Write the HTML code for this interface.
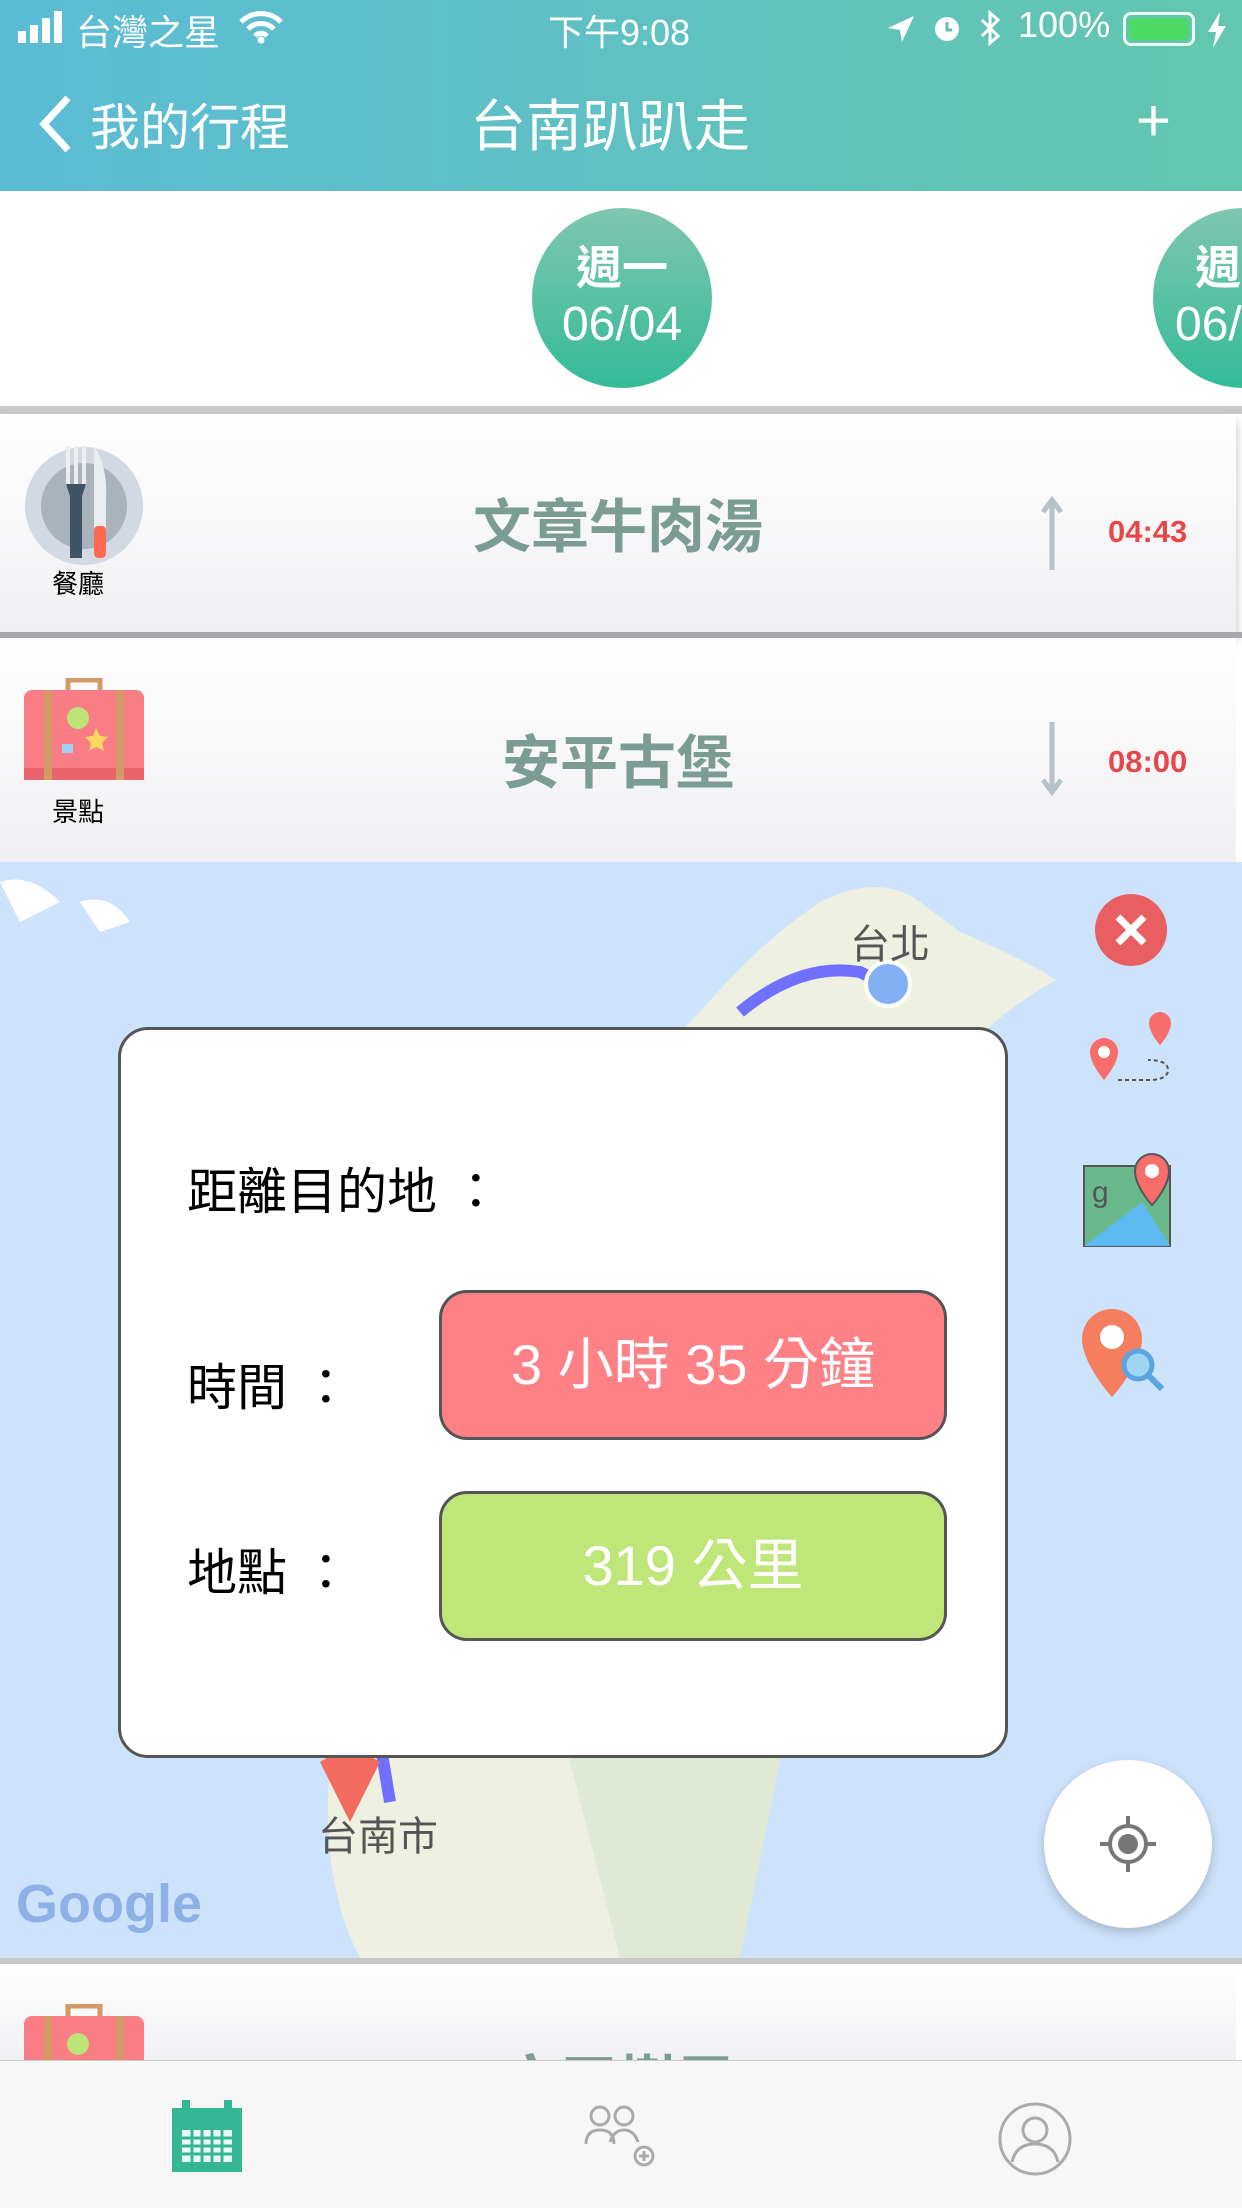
<!DOCTYPE html>
<html><head><meta charset="utf-8"><style>
*{margin:0;padding:0;box-sizing:border-box}
body{width:1242px;height:2208px;overflow:hidden;position:relative;font-family:"Liberation Sans","Noto Sans CJK TC",sans-serif;background:#fff}
.abs{position:absolute}
.hdr{left:0;top:0;width:1242px;height:191px;background:linear-gradient(90deg,#5bbcd6,#63c6ae)}
.st{color:#fff;font-size:36px;top:4px}
.nav{color:#fff;font-size:56px;top:82px}
.circ{border-radius:50%;background:linear-gradient(#7fc6b0,#34bb98);color:#fff;text-align:center}
.row{left:0;width:1236px;background:linear-gradient(#fff,#f0f0f3);box-shadow:0 8px 10px rgba(0,0,0,.25)}
.rt{width:100%;text-align:center;color:#7b9c92;font-size:58px;font-weight:bold}
.tm{color:#e8474a;font-size:31px;font-weight:bold;left:1108px}
.lbl{font-size:50px;color:#000}
.btn{left:439px;width:508px;border:3px solid #555;border-radius:28px;color:#fff;font-size:56px;text-align:center}
</style></head><body>
<div class="abs hdr"></div>
<div class="abs st" style="left:18px;top:10px"><svg width="50" height="32"><rect x="0" y="20" width="8" height="12" fill="#fff"/><rect x="12" y="14" width="8" height="18" fill="#fff"/><rect x="24" y="7" width="8" height="25" fill="#fff"/><rect x="36" y="0" width="8" height="32" fill="#fff"/></svg></div>
<div class="abs st" style="left:76px">台灣之星</div>
<div class="abs" style="left:238px;top:10px"><svg width="46" height="34" viewBox="0 0 46 34"><path d="M3 12a28 28 0 0 1 40 0M10 19a18 18 0 0 1 26 0M17 26a8 8 0 0 1 12 0" stroke="#fff" stroke-width="5" fill="none"/><circle cx="23" cy="30" r="3.5" fill="#fff"/></svg></div>
<div class="abs st" style="left:548px">下午9:08</div>
<div class="abs" style="left:886px;top:14px"><svg width="30" height="30"><path d="M28 2L2 14l12 2 2 12z" fill="#fff"/></svg></div>
<div class="abs" style="left:932px;top:10px"><svg width="30" height="34"><circle cx="15" cy="19" r="12" fill="#fff"/><path d="M15 12v8h5" stroke="#5fc1bd" stroke-width="3" fill="none"/></svg></div>
<div class="abs" style="left:978px;top:10px"><svg width="24" height="36"><path d="M4 10l16 16-8 7V3l8 7L4 26" stroke="#fff" stroke-width="3" fill="none"/></svg></div>
<div class="abs st" style="left:1018px">100%</div>
<div class="abs" style="left:1123px;top:12px;width:72px;height:34px;border:3px solid #eafaf3;border-radius:8px;padding:3px"><div style="width:100%;height:100%;background:#4cd964;border-radius:4px"></div></div>
<div class="abs" style="left:1206px;top:12px"><svg width="22" height="36"><path d="M14 0L2 20h8l-3 16 13-22h-8z" fill="#fff"/></svg></div>
<div class="abs" style="left:36px;top:94px"><svg width="40" height="60"><path d="M32 4L8 30l24 26" stroke="#fff" stroke-width="7" fill="none"/></svg></div>
<div class="abs nav" style="left:90px;font-size:50px;top:88px">我的行程</div>
<div class="abs nav" style="left:470px">台南趴趴走</div>
<div class="abs nav" style="left:1136px;font-size:60px;top:86px">+</div>

<div class="abs circ" style="left:532px;top:208px;width:180px;height:180px"><div style="font-size:46px;font-weight:bold;margin-top:34px;line-height:52px">週一</div><div style="font-size:48px;line-height:62px">06/04</div></div>
<div class="abs circ" style="left:1153px;top:208px;width:180px;height:180px;text-align:left;padding-left:42px"><div style="font-size:46px;font-weight:bold;margin-top:34px;line-height:52px">週</div><div style="font-size:48px;line-height:62px;margin-left:-20px">06/</div></div>
<div class="abs" style="left:0;top:406px;width:1242px;height:8px;background:#c8c8c8"></div>

<div class="abs row" style="top:414px;height:218px">
 <div class="abs" style="left:24px;top:32px"><svg width="120" height="120"><circle cx="60" cy="60" r="59" fill="#d3d9e2"/><circle cx="60" cy="60" r="43" fill="#aab2bb"/><path d="M44 0v40M52 0v40M60 0v40" stroke="#eee" stroke-width="4"/><path d="M42 38h20l-4 12v62h-12V50z" fill="#3f5364"/><path d="M70 0q14 20 12 55v57H70z" fill="#e9edf0"/><rect x="70" y="80" width="12" height="32" rx="4" fill="#ff6b52"/></svg></div>
 <div class="abs" style="left:52px;top:150px;font-size:26px">餐廳</div>
 <div class="abs rt" style="top:66px">文章牛肉湯</div>
 <div class="abs" style="left:1040px;top:82px"><svg width="24" height="76"><path d="M12 4v70M3 16L12 4l9 12" stroke="#b6c1c8" stroke-width="5" fill="none"/></svg></div>
 <div class="abs tm" style="top:100px">04:43</div>
</div>
<div class="abs" style="left:0;top:632px;width:1242px;height:6px;background:#a8a8ac"></div>
<div class="abs row" style="top:638px;height:224px;box-shadow:none">
 <div class="abs" style="left:24px;top:40px"><svg width="120" height="104"><path d="M44 12V2h32v10" stroke="#d39a66" stroke-width="5" fill="none"/><rect x="0" y="12" width="120" height="90" rx="8" fill="#f87d84"/><rect x="0" y="90" width="120" height="12" fill="#e9646c"/><rect x="20" y="12" width="8" height="90" fill="#d39a66"/><rect x="92" y="12" width="8" height="90" fill="#d39a66"/><circle cx="54" cy="40" r="11" fill="#bde376"/><path d="M72 50l4 8 8 1-6 6 2 8-8-4-7 4 2-8-6-6 8-1z" fill="#ffd75e"/><rect x="38" y="66" width="11" height="9" fill="#a6cdf2"/></svg></div>
 <div class="abs" style="left:52px;top:154px;font-size:26px">景點</div>
 <div class="abs rt" style="top:78px">安平古堡</div>
 <div class="abs" style="left:1040px;top:82px"><svg width="24" height="76"><path d="M12 2v70M3 60l9 12 9-12" stroke="#b6c1c8" stroke-width="5" fill="none"/></svg></div>
 <div class="abs tm" style="top:106px">08:00</div>
</div>

<div class="abs" style="left:0;top:862px;width:1242px;height:1096px;background:#cde2fb;overflow:hidden">
 <svg class="abs" style="left:0;top:0" width="1242" height="1096">
  <path d="M700 150 Q760 80 820 40 Q880 10 920 40 L960 70 Q1030 100 1056 118 Q980 160 920 240 Q880 320 860 420 Q840 540 820 700 Q780 880 740 1000 L720 1096 H360 Q320 1020 330 900 Q350 780 420 600 Q520 380 600 250Z" fill="#eef0e2"/>
  <path d="M560 860 Q640 700 760 500 Q820 420 860 460 Q820 700 780 900 L740 1096 H620Z" fill="#dfe9d4"/>
  <path d="M740 150 Q800 100 860 110 L880 120" stroke="#7070ff" stroke-width="12" fill="none"/>
  <path d="M380 880 L390 940" stroke="#7070ff" stroke-width="12"/>
  <circle cx="888" cy="122" r="22" fill="#82b0f2" stroke="#fff" stroke-width="4"/>
  <path d="M320 900 Q350 880 380 900 L350 960z" fill="#f26b5e"/>
  <path d="M0 20 Q30 10 60 40 L20 60z M80 40 Q110 30 130 60 L100 70z" fill="#fff"/>
  <text x="850" y="96" font-size="40" fill="#555" font-family="Noto Sans CJK TC">台北</text>
  <text x="318" y="988" font-size="40" fill="#555" font-family="Noto Sans CJK TC">台南市</text>
  <text x="16" y="1060" font-size="54" fill="#8fb0e6" font-family="Liberation Sans" font-weight="bold">Google</text>
 </svg>
 <svg class="abs" style="left:1094px;top:31px" width="74" height="74"><circle cx="37" cy="37" r="36" fill="#e95f61"/><path d="M24 24l26 26M50 24L24 50" stroke="#fff" stroke-width="7"/></svg>
 <svg class="abs" style="left:1082px;top:148px" width="96" height="88"><path d="M22 28a14 14 0 0 1 14 14c0 12-14 28-14 28S8 54 8 42a14 14 0 0 1 14-14z" fill="#f76e6a"/><circle cx="22" cy="42" r="6" fill="#fff"/><path d="M78 2a11 11 0 0 1 11 11c0 10-11 22-11 22S67 23 67 13A11 11 0 0 1 78 2z" fill="#f76e6a"/><path d="M36 70h30q20 0 20-10t-20-10" stroke="#555" stroke-width="2" stroke-dasharray="4 3" fill="none"/></svg>
 <svg class="abs" style="left:1082px;top:290px" width="96" height="96"><rect x="2" y="14" width="86" height="80" fill="#6ab98a" stroke="#555" stroke-width="2"/><path d="M2 94L60 50 88 94z" fill="#5db9f1"/><path d="M70 2a17 17 0 0 1 17 17c0 16-17 34-17 34S53 35 53 19A17 17 0 0 1 70 2z" fill="#f76e6a" stroke="#555" stroke-width="2"/><circle cx="70" cy="19" r="7" fill="#fff"/><text x="10" y="50" font-size="30" fill="#555">g</text></svg>
 <svg class="abs" style="left:1080px;top:445px" width="100" height="100"><path d="M32 2a30 30 0 0 1 30 30c0 25-30 58-30 58S2 57 2 32A30 30 0 0 1 32 2z" fill="#f47e5e"/><circle cx="32" cy="30" r="12" fill="#fff"/><circle cx="58" cy="58" r="14" fill="#9fd5f3" stroke="#5aa4e0" stroke-width="5"/><path d="M68 68l14 14" stroke="#5aa4e0" stroke-width="6"/></svg>
 <div class="abs" style="left:1044px;top:898px;width:168px;height:168px;border-radius:50%;background:#fff;box-shadow:0 4px 10px rgba(0,0,0,.2)"><svg class="abs" style="left:52px;top:52px" width="64" height="64"><circle cx="32" cy="32" r="18" fill="none" stroke="#777" stroke-width="4"/><circle cx="32" cy="32" r="10" fill="#777"/><path d="M32 4v10M32 50v10M4 32h10M50 32h10" stroke="#777" stroke-width="4"/></svg></div>
</div>

<div class="abs" style="left:118px;top:1027px;width:890px;height:731px;background:#fff;border:3px solid #555;border-radius:30px"></div>
<div class="abs lbl" style="left:187px;top:1152px">距離目的地 ：</div>
<div class="abs lbl" style="left:187px;top:1348px">時間 ：</div>
<div class="abs lbl" style="left:187px;top:1533px">地點 ：</div>
<div class="abs btn" style="top:1290px;height:150px;background:#fe8186;line-height:144px">3 小時 35 分鐘</div>
<div class="abs btn" style="top:1491px;height:150px;background:#bee678;line-height:144px">319 公里</div>

<div class="abs" style="left:0;top:1958px;width:1242px;height:6px;background:#c8c8c8"></div>
<div class="abs row" style="top:1964px;height:100px;box-shadow:none">
 <div class="abs" style="left:24px;top:40px"><svg width="120" height="60"><path d="M44 12V2h32v10" stroke="#d39a66" stroke-width="5" fill="none"/><rect x="0" y="12" width="120" height="60" rx="8" fill="#f87d84"/><rect x="20" y="12" width="8" height="60" fill="#d39a66"/><rect x="92" y="12" width="8" height="60" fill="#d39a66"/><circle cx="54" cy="40" r="11" fill="#bde376"/></svg></div>
 <div class="abs rt" style="top:72px">安平樹屋</div>
</div>
<div class="abs" style="left:0;top:2060px;width:1242px;height:148px;background:#f7f7f7;border-top:1px solid #ccc"></div>
<svg class="abs" style="left:172px;top:2100px" width="70" height="72"><rect x="0" y="8" width="70" height="64" fill="#35b795"/><rect x="10" y="0" width="8" height="14" fill="#35b795"/><rect x="52" y="0" width="8" height="14" fill="#35b795"/><g fill="#fff"><rect x="10" y="30" width="50" height="32" opacity=".9"/></g><path d="M10 38h50M10 46h50M10 54h50M20 30v32M30 30v32M40 30v32M50 30v32" stroke="#35b795" stroke-width="3"/></svg>
<svg class="abs" style="left:584px;top:2104px" width="76" height="66" fill="none" stroke="#aaa" stroke-width="3"><circle cx="16" cy="12" r="9"/><circle cx="40" cy="12" r="9"/><path d="M2 40q0-14 14-14t14 14M26 38q4-12 14-12t14 12"/><circle cx="60" cy="52" r="9"/><path d="M60 47v10M55 52h10"/></svg>
<svg class="abs" style="left:998px;top:2102px" width="74" height="74" fill="none" stroke="#aaa" stroke-width="3"><circle cx="37" cy="37" r="35"/><circle cx="37" cy="28" r="12"/><path d="M14 60q4-18 23-18t23 18"/></svg>
</body></html>
